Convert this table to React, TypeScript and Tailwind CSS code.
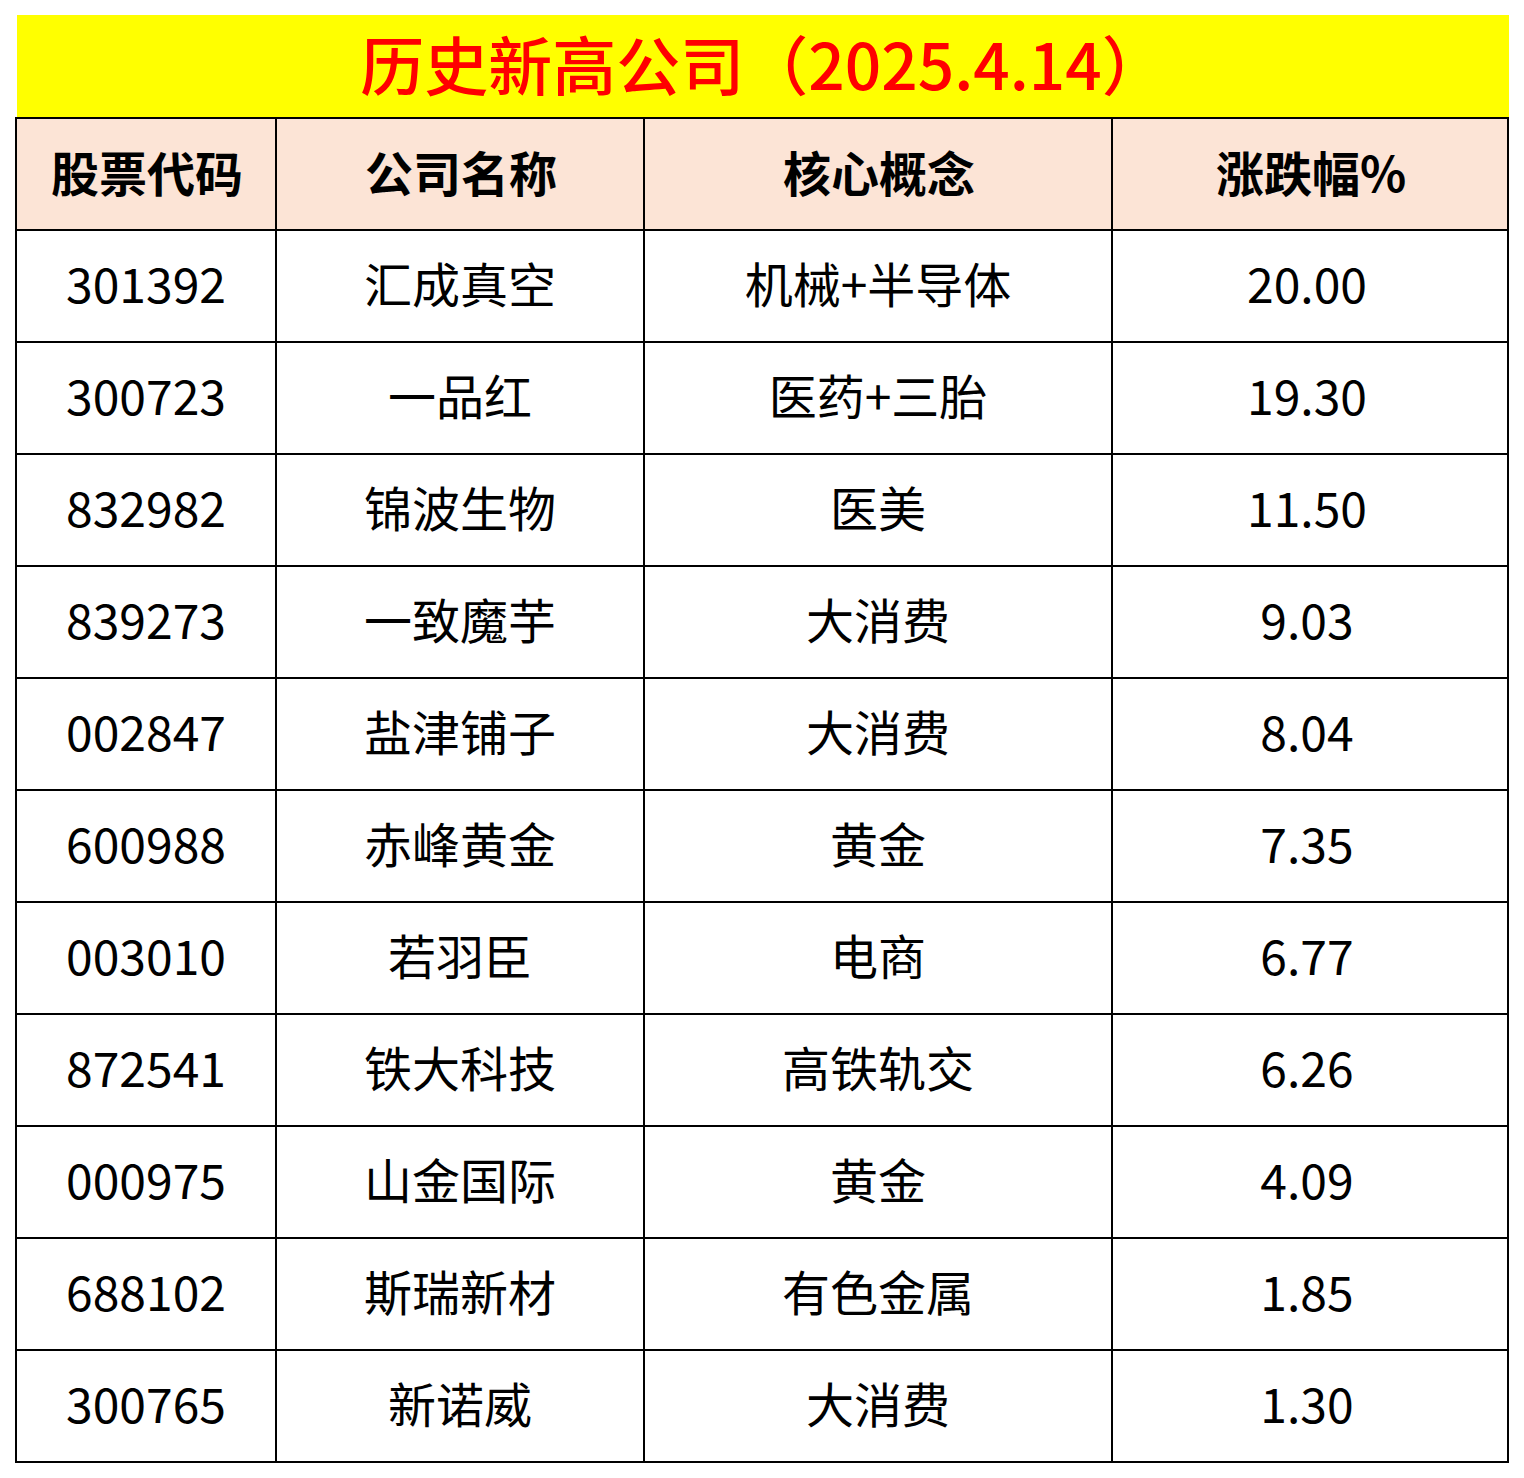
const rows = [
  ['301392', '汇成真空', '机械+半导体', '20.00'],
  ['300723', '一品红', '医药+三胎', '19.30'],
  ['832982', '锦波生物', '医美', '11.50'],
  ['839273', '一致魔芋', '大消费', '9.03'],
  ['002847', '盐津铺子', '大消费', '8.04'],
  ['600988', '赤峰黄金', '黄金', '7.35'],
  ['003010', '若羽臣', '电商', '6.77'],
  ['872541', '铁大科技', '高铁轨交', '6.26'],
  ['000975', '山金国际', '黄金', '4.09'],
  ['688102', '斯瑞新材', '有色金属', '1.85'],
  ['300765', '新诺威', '大消费', '1.30'],
]

const headers = ['股票代码', '公司名称', '核心概念', '涨跌幅%']

function App() {
  return (
    <div
      className="min-h-[1478px] w-[1524px] bg-white pl-[15px] pt-[15px]"
      style={{ fontFamily: '"Noto Sans CJK SC", "Noto Sans", sans-serif' }}
    >
      <div className="ml-[2px] flex h-[102px] w-[1492px] items-center justify-center bg-[#ffff00] pb-[9px]">
        <span className="text-[64px] font-medium leading-none text-[#ff0000]">
          历史新高公司（2025.4.14）
        </span>
      </div>
      <div className="grid w-[1494px] grid-cols-[258px_366px_466px_394px] gap-[2px] bg-black p-[2px]">
        {headers.map((h) => (
          <div
            key={h}
            className="flex h-[110px] items-center justify-center bg-[#fce4d6] pb-[7px] pl-[2px] text-[48px] font-bold text-black"
          >
            {h}
          </div>
        ))}
        {rows.map((r) =>
          r.map((c, i) => (
            <div
              key={r[0] + i}
              className={`flex h-[110px] items-center justify-center bg-white pb-[8px] text-[48px] text-black ${i === 3 ? 'pr-[6px]' : ''}`}
            >
              {c}
            </div>
          ))
        )}
      </div>
    </div>
  )
}

export default App
